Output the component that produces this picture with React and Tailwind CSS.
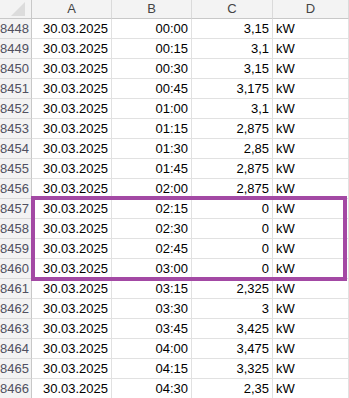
import React from "react";

const rows = [
  [8448, "00:00", "3,15"],
  [8449, "00:15", "3,1"],
  [8450, "00:30", "3,15"],
  [8451, "00:45", "3,175"],
  [8452, "01:00", "3,1"],
  [8453, "01:15", "2,875"],
  [8454, "01:30", "2,85"],
  [8455, "01:45", "2,875"],
  [8456, "02:00", "2,875"],
  [8457, "02:15", "0"],
  [8458, "02:30", "0"],
  [8459, "02:45", "0"],
  [8460, "03:00", "0"],
  [8461, "03:15", "2,325"],
  [8462, "03:30", "3"],
  [8463, "03:45", "3,425"],
  [8464, "04:00", "3,475"],
  [8465, "04:15", "3,325"],
  [8466, "04:30", "2,35"],
];

const cell = "h-[20px] border-r border-b border-[#e1e1e1] flex items-center";

const App = () => {
  return (
    <div className="relative w-[349px] h-[398px] overflow-hidden bg-white font-['Liberation_Sans',Arial,sans-serif] text-[13px] text-black">
      <div className="grid grid-cols-[32px_80px_80px_81px_1fr]">
        <div className="relative h-[19px] bg-[#f3f3f3] border-r border-b border-[#c8c8c8]">
          <div className="absolute right-[6px] bottom-[2px] w-0 h-0 border-l-[14px] border-l-transparent border-b-[14px] border-b-[#dcdcdc]" />
        </div>
        {["A", "B", "C", "D"].map((c) => (
          <div
            key={c}
            className="h-[19px] bg-[#f3f3f3] border-r border-[#dadada] border-b border-b-[#c8c8c8] flex items-center justify-center text-[#444]"
          >
            {c}
          </div>
        ))}
        {rows.map(([n, t, v]) => (
          <React.Fragment key={n}>
            <div className="h-[20px] bg-[#f3f3f3] border-r border-[#c8c8c8] border-b border-b-[#dadada] flex items-center justify-end pr-[2px] text-[#505060]">
              {n}
            </div>
            <div className={`${cell} justify-end pr-[3px]`}>30.03.2025</div>
            <div className={`${cell} justify-end pr-[3px]`}>{t}</div>
            <div className={`${cell} justify-end pr-[3px]`}>{v}</div>
            <div className={`${cell} pl-[3px]`}>kW</div>
          </React.Fragment>
        ))}
      </div>
      <div className="absolute left-[31px] top-[196px] w-[316px] h-[85px] border-4 border-[#a349a4]" />
    </div>
  );
};

export default App;
